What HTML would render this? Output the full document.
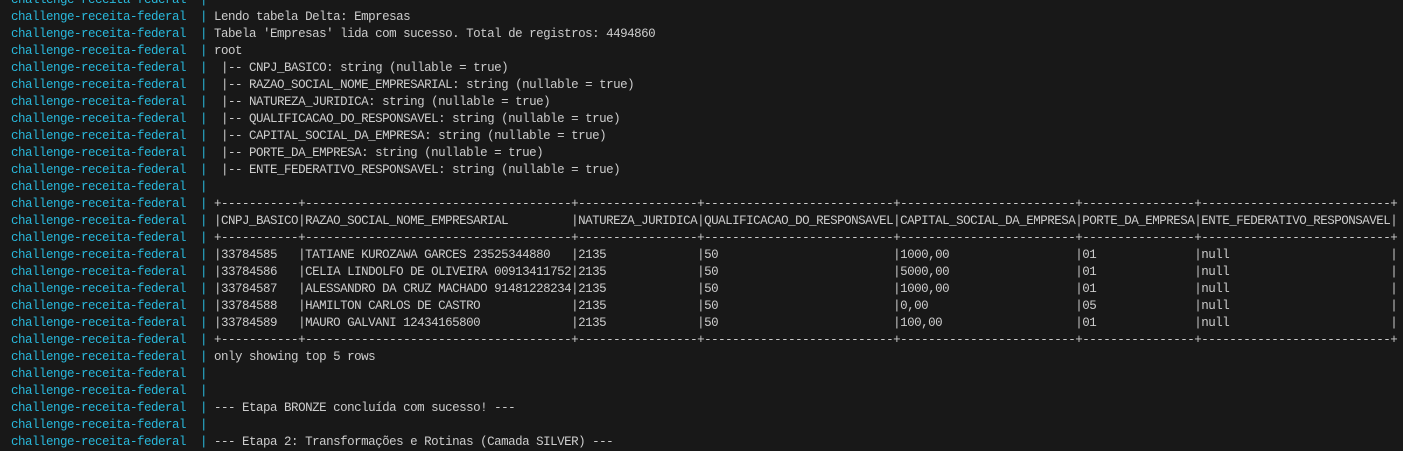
<!DOCTYPE html>
<html><head><meta charset="utf-8"><style>
html,body{margin:0;padding:0;background:#181818;width:1403px;height:439px;overflow:hidden}
pre{position:absolute;left:11px;top:-8px;margin:0;font-family:"Liberation Mono",monospace;font-size:12.5px;letter-spacing:-0.5px;line-height:17px;color:#cccccc;white-space:pre}
.n{color:#29b8db}
</style></head><body><pre><span class="n">challenge-receita-federal  |</span> 
<span class="n">challenge-receita-federal  |</span> Lendo tabela Delta: Empresas
<span class="n">challenge-receita-federal  |</span> Tabela 'Empresas' lida com sucesso. Total de registros: 4494860
<span class="n">challenge-receita-federal  |</span> root
<span class="n">challenge-receita-federal  |</span>  |-- CNPJ_BASICO: string (nullable = true)
<span class="n">challenge-receita-federal  |</span>  |-- RAZAO_SOCIAL_NOME_EMPRESARIAL: string (nullable = true)
<span class="n">challenge-receita-federal  |</span>  |-- NATUREZA_JURIDICA: string (nullable = true)
<span class="n">challenge-receita-federal  |</span>  |-- QUALIFICACAO_DO_RESPONSAVEL: string (nullable = true)
<span class="n">challenge-receita-federal  |</span>  |-- CAPITAL_SOCIAL_DA_EMPRESA: string (nullable = true)
<span class="n">challenge-receita-federal  |</span>  |-- PORTE_DA_EMPRESA: string (nullable = true)
<span class="n">challenge-receita-federal  |</span>  |-- ENTE_FEDERATIVO_RESPONSAVEL: string (nullable = true)
<span class="n">challenge-receita-federal  |</span> 
<span class="n">challenge-receita-federal  |</span> +-----------+--------------------------------------+-----------------+---------------------------+-------------------------+----------------+---------------------------+
<span class="n">challenge-receita-federal  |</span> |CNPJ_BASICO|RAZAO_SOCIAL_NOME_EMPRESARIAL         |NATUREZA_JURIDICA|QUALIFICACAO_DO_RESPONSAVEL|CAPITAL_SOCIAL_DA_EMPRESA|PORTE_DA_EMPRESA|ENTE_FEDERATIVO_RESPONSAVEL|
<span class="n">challenge-receita-federal  |</span> +-----------+--------------------------------------+-----------------+---------------------------+-------------------------+----------------+---------------------------+
<span class="n">challenge-receita-federal  |</span> |33784585   |TATIANE KUROZAWA GARCES 23525344880   |2135             |50                         |1000,00                  |01              |null                       |
<span class="n">challenge-receita-federal  |</span> |33784586   |CELIA LINDOLFO DE OLIVEIRA 00913411752|2135             |50                         |5000,00                  |01              |null                       |
<span class="n">challenge-receita-federal  |</span> |33784587   |ALESSANDRO DA CRUZ MACHADO 91481228234|2135             |50                         |1000,00                  |01              |null                       |
<span class="n">challenge-receita-federal  |</span> |33784588   |HAMILTON CARLOS DE CASTRO             |2135             |50                         |0,00                     |05              |null                       |
<span class="n">challenge-receita-federal  |</span> |33784589   |MAURO GALVANI 12434165800             |2135             |50                         |100,00                   |01              |null                       |
<span class="n">challenge-receita-federal  |</span> +-----------+--------------------------------------+-----------------+---------------------------+-------------------------+----------------+---------------------------+
<span class="n">challenge-receita-federal  |</span> only showing top 5 rows
<span class="n">challenge-receita-federal  |</span> 
<span class="n">challenge-receita-federal  |</span> 
<span class="n">challenge-receita-federal  |</span> --- Etapa BRONZE concluída com sucesso! ---
<span class="n">challenge-receita-federal  |</span> 
<span class="n">challenge-receita-federal  |</span> --- Etapa 2: Transformações e Rotinas (Camada SILVER) ---
</pre></body></html>
